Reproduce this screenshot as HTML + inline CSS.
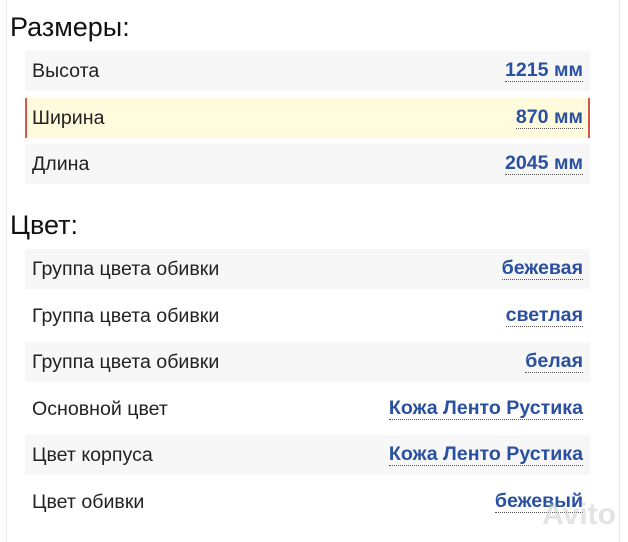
<!DOCTYPE html>
<html><head><meta charset="utf-8"><style>
body{margin:0;width:628px;height:540px;background:#fff;font-family:"Liberation Sans",sans-serif;position:relative;overflow:hidden}
.frame{position:absolute;left:6px;right:8px;top:-2px;bottom:-2px;border-left:1px solid #eee;border-right:1px solid #e6e6e6}
h2{position:absolute;left:10px;margin:0;font-weight:normal;font-size:27px;color:#111}
.r{position:absolute;left:25px;width:565px;height:40px;box-sizing:border-box;padding:0 7px;display:flex;align-items:center;justify-content:space-between;font-size:19.6px;color:#222}
.g{background:#f7f7f7}
.y{background:#fffbdc;border-left:2px solid #d9534f;border-right:2px solid #d9534f;padding:0 5px}
.v{font-weight:bold;color:#2a50a0;border-bottom:1px dotted #555;line-height:21px}
.wm{position:absolute;right:12px;bottom:8px;font-size:30px;font-weight:bold;color:rgba(200,200,200,.5)}
</style></head><body>
<div class="frame"></div>
<h2 style="top:12px">Размеры:</h2>
<div class="r g" style="top:51px"><span>Высота</span><span class="v">1215 мм</span></div>
<div class="r y" style="top:98px"><span>Ширина</span><span class="v">870 мм</span></div>
<div class="r g" style="top:144px"><span>Длина</span><span class="v">2045 мм</span></div>
<h2 style="top:210px">Цвет:</h2>
<div class="r g" style="top:249px"><span>Группа цвета обивки</span><span class="v">бежевая</span></div>
<div class="r" style="top:296px"><span>Группа цвета обивки</span><span class="v">светлая</span></div>
<div class="r g" style="top:342px"><span>Группа цвета обивки</span><span class="v">белая</span></div>
<div class="r" style="top:389px"><span>Основной цвет</span><span class="v">Кожа Ленто Рустика</span></div>
<div class="r g" style="top:435px"><span>Цвет корпуса</span><span class="v">Кожа Ленто Рустика</span></div>
<div class="r" style="top:482px"><span>Цвет обивки</span><span class="v">бежевый</span></div>
<div class="wm">Avito</div>
</body></html>
